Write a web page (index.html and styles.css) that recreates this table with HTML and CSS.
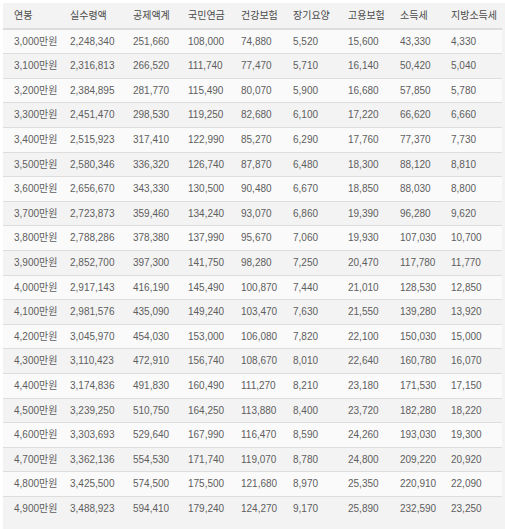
FILE: index.html
```html
<!DOCTYPE html>
<html lang="ko">
<head>
<meta charset="utf-8">
<title>연봉 실수령액 표</title>
<link rel="stylesheet" href="styles.css">
</head>
<body>
<div class="wrap">
<table class="salary">
<colgroup>
<col class="c1"><col class="c2"><col class="c3"><col class="c4"><col class="c5"><col class="c6"><col class="c7"><col class="c8"><col class="c9">
</colgroup>
<thead>
<tr><th>연봉</th><th>실수령액</th><th>공제액계</th><th>국민연금</th><th>건강보험</th><th>장기요양</th><th>고용보험</th><th>소득세</th><th>지방소득세</th></tr>
</thead>
<tbody>
<tr><td>3,000만원</td><td>2,248,340</td><td>251,660</td><td>108,000</td><td>74,880</td><td>5,520</td><td>15,600</td><td>43,330</td><td>4,330</td></tr>
<tr><td>3,100만원</td><td>2,316,813</td><td>266,520</td><td>111,740</td><td>77,470</td><td>5,710</td><td>16,140</td><td>50,420</td><td>5,040</td></tr>
<tr><td>3,200만원</td><td>2,384,895</td><td>281,770</td><td>115,490</td><td>80,070</td><td>5,900</td><td>16,680</td><td>57,850</td><td>5,780</td></tr>
<tr><td>3,300만원</td><td>2,451,470</td><td>298,530</td><td>119,250</td><td>82,680</td><td>6,100</td><td>17,220</td><td>66,620</td><td>6,660</td></tr>
<tr><td>3,400만원</td><td>2,515,923</td><td>317,410</td><td>122,990</td><td>85,270</td><td>6,290</td><td>17,760</td><td>77,370</td><td>7,730</td></tr>
<tr><td>3,500만원</td><td>2,580,346</td><td>336,320</td><td>126,740</td><td>87,870</td><td>6,480</td><td>18,300</td><td>88,120</td><td>8,810</td></tr>
<tr><td>3,600만원</td><td>2,656,670</td><td>343,330</td><td>130,500</td><td>90,480</td><td>6,670</td><td>18,850</td><td>88,030</td><td>8,800</td></tr>
<tr><td>3,700만원</td><td>2,723,873</td><td>359,460</td><td>134,240</td><td>93,070</td><td>6,860</td><td>19,390</td><td>96,280</td><td>9,620</td></tr>
<tr><td>3,800만원</td><td>2,788,286</td><td>378,380</td><td>137,990</td><td>95,670</td><td>7,060</td><td>19,930</td><td>107,030</td><td>10,700</td></tr>
<tr><td>3,900만원</td><td>2,852,700</td><td>397,300</td><td>141,750</td><td>98,280</td><td>7,250</td><td>20,470</td><td>117,780</td><td>11,770</td></tr>
<tr><td>4,000만원</td><td>2,917,143</td><td>416,190</td><td>145,490</td><td>100,870</td><td>7,440</td><td>21,010</td><td>128,530</td><td>12,850</td></tr>
<tr><td>4,100만원</td><td>2,981,576</td><td>435,090</td><td>149,240</td><td>103,470</td><td>7,630</td><td>21,550</td><td>139,280</td><td>13,920</td></tr>
<tr><td>4,200만원</td><td>3,045,970</td><td>454,030</td><td>153,000</td><td>106,080</td><td>7,820</td><td>22,100</td><td>150,030</td><td>15,000</td></tr>
<tr><td>4,300만원</td><td>3,110,423</td><td>472,910</td><td>156,740</td><td>108,670</td><td>8,010</td><td>22,640</td><td>160,780</td><td>16,070</td></tr>
<tr><td>4,400만원</td><td>3,174,836</td><td>491,830</td><td>160,490</td><td>111,270</td><td>8,210</td><td>23,180</td><td>171,530</td><td>17,150</td></tr>
<tr><td>4,500만원</td><td>3,239,250</td><td>510,750</td><td>164,250</td><td>113,880</td><td>8,400</td><td>23,720</td><td>182,280</td><td>18,220</td></tr>
<tr><td>4,600만원</td><td>3,303,693</td><td>529,640</td><td>167,990</td><td>116,470</td><td>8,590</td><td>24,260</td><td>193,030</td><td>19,300</td></tr>
<tr><td>4,700만원</td><td>3,362,136</td><td>554,530</td><td>171,740</td><td>119,070</td><td>8,780</td><td>24,800</td><td>209,220</td><td>20,920</td></tr>
<tr><td>4,800만원</td><td>3,425,500</td><td>574,500</td><td>175,500</td><td>121,680</td><td>8,970</td><td>25,350</td><td>220,910</td><td>22,090</td></tr>
<tr><td>4,900만원</td><td>3,488,923</td><td>594,410</td><td>179,240</td><td>124,270</td><td>9,170</td><td>25,890</td><td>232,590</td><td>23,250</td></tr>
</tbody>
</table>
</div>
</body>
</html>
```

FILE: styles.css
```css
html, body {
  margin: 0;
  padding: 0;
  background: #ffffff;
}
body {
  font-family: "Liberation Sans", "Noto Sans CJK KR", sans-serif;
  font-size: 10px;
  color: #5e5e5e;
}
.wrap {
  margin: 3px 0 0 3px;
  background: #f3f3f3;
  min-height: 526px;
}
.salary {
  border-collapse: collapse;
  table-layout: fixed;
  width: 499px;
}
.c1 { width: 56px; }
.c2 { width: 63px; }
.c3 { width: 55px; }
.c4 { width: 53px; }
.c5 { width: 52px; }
.c6 { width: 55px; }
.c7 { width: 52px; }
.c8 { width: 51px; }
.c9 { width: 62px; }
.salary th,
.salary td {
  text-align: left;
  font-weight: normal;
  white-space: nowrap;
  line-height: 15.6px;
  padding: 4px 0 4px 11px;
}
.salary th {
  color: #4a4a4a;
  padding-top: 5px;
  border-bottom: 2px solid #dddddd;
}
.salary td {
  border-top: 1px solid #dddddd;
}
.salary tbody tr:first-child td {
  border-top: 0;
}
.salary tbody tr:nth-child(odd) {
  background: #fafafa;
}
```
